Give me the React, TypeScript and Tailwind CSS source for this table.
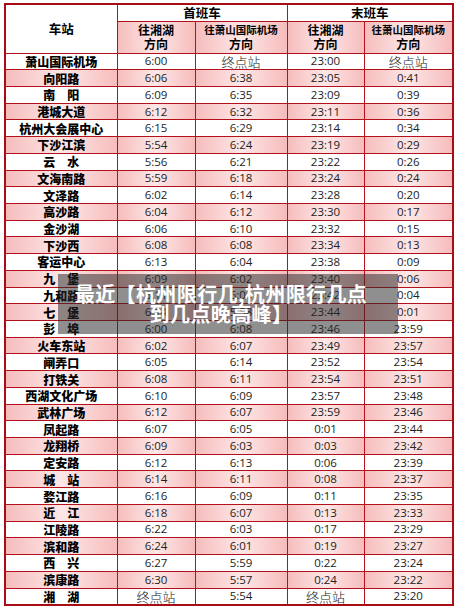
import React from 'react';

type Row = [string, string, string, string, string];

const rows: Row[] = [
    ['萧山国际机场', '6:00', '终点站', '23:00', '终点站'],
    ['向阳路', '6:06', '6:38', '23:05', '0:41'],
    ['南\u3000阳', '6:09', '6:35', '23:09', '0:39'],
    ['港城大道', '6:12', '6:32', '23:11', '0:36'],
    ['杭州大会展中心', '6:15', '6:29', '23:14', '0:34'],
    ['下沙江滨', '5:54', '6:24', '23:19', '0:29'],
    ['云\u3000水', '5:56', '6:21', '23:22', '0:26'],
    ['文海南路', '5:59', '6:18', '23:24', '0:24'],
    ['文泽路', '6:02', '6:14', '23:28', '0:20'],
    ['高沙路', '6:04', '6:12', '23:30', '0:17'],
    ['金沙湖', '6:06', '6:10', '23:32', '0:15'],
    ['下沙西', '6:08', '6:08', '23:34', '0:13'],
    ['客运中心', '6:13', '6:04', '23:38', '0:09'],
    ['九\u3000堡', '6:09', '6:02', '23:40', '0:06'],
    ['九和路', '6:11', '6:00', '23:42', '0:04'],
    ['七\u3000堡', '6:14', '5:58', '23:44', '0:01'],
    ['彭\u3000埠', '6:00', '6:08', '23:46', '23:59'],
    ['火车东站', '6:02', '6:07', '23:49', '23:57'],
    ['闸弄口', '6:05', '6:14', '23:52', '23:54'],
    ['打铁关', '6:08', '6:11', '23:54', '23:51'],
    ['西湖文化广场', '6:10', '6:09', '23:57', '23:48'],
    ['武林广场', '6:12', '6:07', '23:59', '23:46'],
    ['凤起路', '6:07', '6:05', '0:01', '23:44'],
    ['龙翔桥', '6:09', '6:03', '0:03', '23:42'],
    ['定安路', '6:12', '6:13', '0:06', '23:39'],
    ['城\u3000站', '6:14', '6:11', '0:08', '23:37'],
    ['婺江路', '6:16', '6:09', '0:11', '23:35'],
    ['近\u3000江', '6:18', '6:07', '0:13', '23:33'],
    ['江陵路', '6:22', '6:03', '0:17', '23:29'],
    ['滨和路', '6:24', '6:01', '0:19', '23:27'],
    ['西\u3000兴', '6:27', '5:59', '0:22', '23:24'],
    ['滨康路', '6:30', '5:57', '0:24', '23:22'],
    ['湘\u3000湖', '终点站', '5:54', '终点站', '23:20'],
];

const cjk = "font-['Noto_Sans_CJK_SC',sans-serif]";
const pink = 'bg-[linear-gradient(90deg,#f6bcbc_0%,#fde7e7_50%,#f6bcbc_100%)]';
const line = 'border border-[#b3121c] p-0 text-[11px] leading-[12px] align-middle';

const Cell = ({ v }: { v: string }) =>
    v === '终点站' ? (
        <span className={`${cjk} block text-[13px] leading-[13px] font-light text-[#222]`}>{v}</span>
    ) : (
        <span className="font-['Open_Sans',sans-serif] block text-[11.5px] leading-[12px] text-[#222]">{v}</span>
    );

export default function App() {
    return (
        <div className="relative w-[458px] h-[607px] bg-white overflow-hidden pl-[4px] pt-[3px]">
            <table className="w-[448px] table-fixed border-collapse border-2 border-[#a80d16] text-center">
                <colgroup>
                    <col className="w-[112px]" />
                    <col className="w-[78px]" />
                    <col className="w-[92px]" />
                    <col className="w-[77px]" />
                    <col className="w-[89px]" />
                </colgroup>
                <thead className={`${cjk} font-black text-black`}>
                    <tr className="h-[17px]">
                        <th rowSpan={2} className={`${line} bg-white`}><span className="block text-[12.5px] leading-[13px]">车站</span></th>
                        <th colSpan={2} className={`${line} bg-white`}><span className="block text-[12.5px] leading-[13px]">首班车</span></th>
                        <th colSpan={2} className={`${line} bg-white`}><span className="block text-[12.5px] leading-[13px]">末班车</span></th>
                    </tr>
                    <tr className="h-[32px]">
                        <th className={`${line} ${pink}`}>
                            <span className="block text-[12px] leading-[14px]">往湘湖</span>
                            <span className="block text-[12px] leading-[14px]">方向</span>
                        </th>
                        <th className={`${line} ${pink}`}>
                            <span className="block text-[10.5px] leading-[14px]">往萧山国际机场</span>
                            <span className="block text-[12px] leading-[14px]">方向</span>
                        </th>
                        <th className={`${line} ${pink}`}>
                            <span className="block text-[12px] leading-[14px]">往湘湖</span>
                            <span className="block text-[12px] leading-[14px]">方向</span>
                        </th>
                        <th className={`${line} ${pink}`}>
                            <span className="block text-[10.5px] leading-[14px]">往萧山国际机场</span>
                            <span className="block text-[12px] leading-[14px]">方向</span>
                        </th>
                    </tr>
                </thead>
                <tbody>
                    {rows.map((r, i) => (
                        <tr key={i} className="h-[16.73px]">
                            <td className={`${line} ${i % 2 ? pink : 'bg-white'}`}>
                                <span className={`${cjk} block font-black text-[12px] leading-[13px] text-black whitespace-nowrap`}>{r[0]}</span>
                            </td>
                            {r.slice(1).map((v, j) => (
                                <td key={j} className={`${line} ${i % 2 ? pink : 'bg-white'}`}>
                                    <Cell v={v} />
                                </td>
                            ))}
                        </tr>
                    ))}
                </tbody>
            </table>

            {/* article title overlay */}
            <div className="absolute left-[58px] top-[274px] w-[340px] h-[60px] bg-[rgba(40,40,40,0.52)] flex items-center justify-center pr-[14px]">
                <p className={`${cjk} font-bold text-white text-[20px] leading-[20px] tracking-[0.4px] text-center`}>
                    最近【杭州限行几,杭州限行几点<br />到几点晚高峰】
                </p>
            </div>
        </div>
    );
}
